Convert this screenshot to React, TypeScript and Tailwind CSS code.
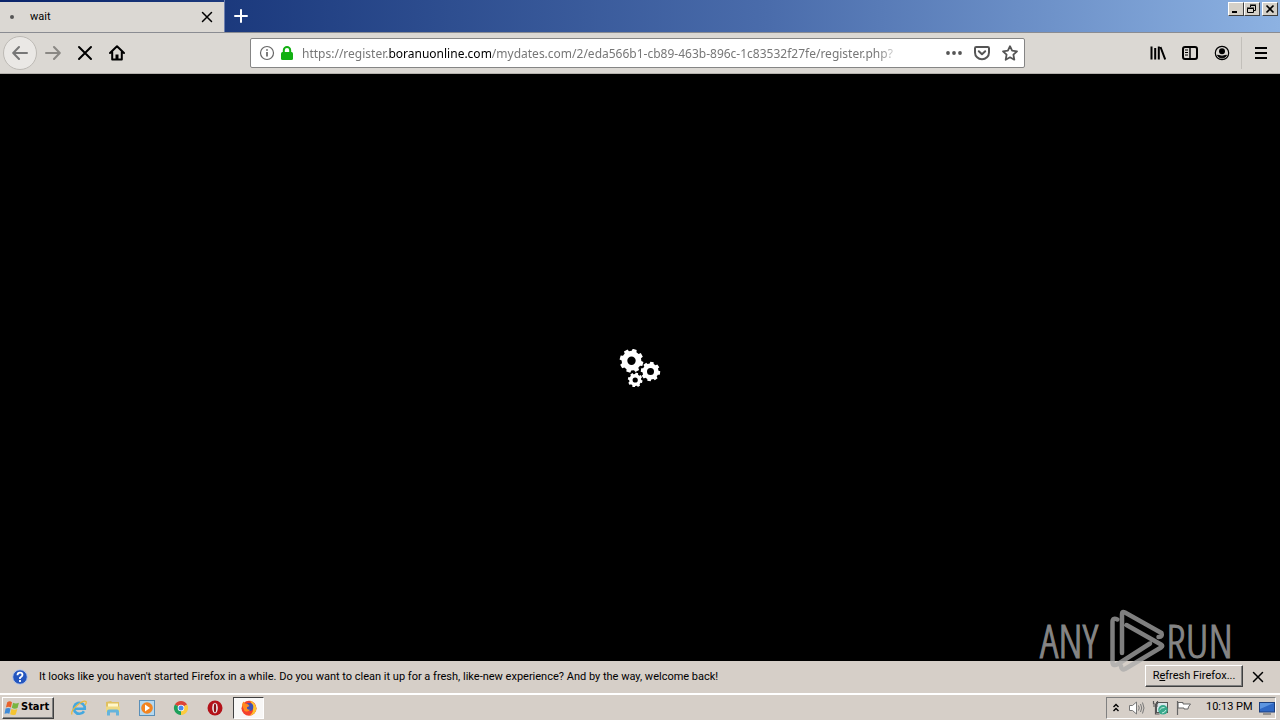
import React from "react";

const ui = "font-['Roboto','Liberation_Sans',sans-serif]";

type IconProps = { className?: string };

function gearPath(cx: number, cy: number, r: number, teeth: number, hole: number, turn: number): string {
  const pts: string[] = [];
  const step = (Math.PI * 2) / teeth;
  for (let i = 0; i < teeth; i++) {
    const a = (i + turn) * step;
    const put = (rad: number, ang: number) =>
      pts.push(`${(cx + rad * Math.cos(ang)).toFixed(2)} ${(cy + rad * Math.sin(ang)).toFixed(2)}`);
    put(r * 0.82, a - step * 0.32);
    put(r, a - step * 0.22);
    put(r, a + step * 0.22);
    put(r * 0.82, a + step * 0.32);
  }
  return `M${pts.join("L")}Z M${cx - hole} ${cy}a${hole} ${hole} 0 1 0 ${hole * 2} 0a${hole} ${hole} 0 1 0 ${-hole * 2} 0Z`;
}

function Gears() {
  return (
    <svg width="42" height="38" viewBox="0 0 42 38" fill="#fff" fillRule="evenodd" aria-label="Loading">
      <path d={gearPath(12.5, 11.7, 12, 8, 4.2, 0.35)} />
      <path d={gearPath(31.5, 22.5, 9.8, 8, 3.5, 0.2)} />
      <path d={gearPath(16.2, 31, 7.4, 8, 2.6, 0.3)} />
    </svg>
  );
}

function Cross({ className }: IconProps) {
  return (
    <svg className={className} viewBox="0 0 16 16" fill="none" stroke="currentColor" strokeWidth="2" strokeLinecap="round">
      <path d="M2 2l12 12M14 2L2 14" />
    </svg>
  );
}

function Arrow({ className }: IconProps) {
  return (
    <svg className={className} width="16" height="16" viewBox="0 0 16 16" fill="none" stroke="currentColor" strokeWidth="2" strokeLinecap="round" strokeLinejoin="round">
      <path d="M15 8H1.500M7 2L1.200 8L7 14" />
    </svg>
  );
}

function WindowButton({ label, children }: { label: string; children: React.ReactNode }) {
  return (
    <button aria-label={label} className="flex h-[14px] w-4 items-center justify-center border border-t-white border-l-white border-r-[#404040] border-b-[#404040] bg-[#d4d0c8]">
      <svg width="12" height="10" viewBox="0 0 12 10" fill="none" stroke="#000">
        {children}
      </svg>
    </button>
  );
}

function TabStrip() {
  return (
    <div className="flex h-8 items-stretch bg-linear-to-r from-[#0a246a] via-[#4a6cab] via-60% to-[#8db2e2]">
      <div className="mt-[2px] flex w-56 items-center bg-[#dbd8d3] pr-[11px] pl-[10px]">
        <span className="h-1 w-1 rounded-full bg-[#555]" />
        <span className="ml-4 flex-1 text-[11px]">wait</span>
        <button aria-label="Close tab" className="flex h-3 w-3 items-center justify-center">
          <Cross className="h-3 w-3" />
        </button>
      </div>
      <button aria-label="New tab" className="flex w-8 items-center justify-center border-l border-[#6d7fae]">
        <svg width="14" height="14" viewBox="0 0 14 14" stroke="#fff" strokeWidth="2" strokeLinecap="round">
          <path d="M7 1v12M1 7h12" />
        </svg>
      </button>
      <div className="ml-auto flex pt-[2px] pr-[2px]">
        <WindowButton label="Minimize">
          <path d="M2 8h5" strokeWidth="2" />
        </WindowButton>
        <WindowButton label="Restore">
          <path d="M4.500 3V1.500H9.500V6.500H7.500M4 1h6M1.500 4.500h6v4h-6zM1 4h7" />
        </WindowButton>
        <span className="w-[2px]" />
        <WindowButton label="Close">
          <path d="M2.500 1.500l7 7M9.500 1.500l-7 7" strokeWidth="1.700" />
        </WindowButton>
      </div>
    </div>
  );
}

function AddressBar() {
  return (
    <div className="flex h-[30px] w-[775px] items-center rounded-[2px] border border-[#858585] bg-white pr-[6px] pl-2 text-[#555]">
      <button aria-label="Site information">
        <svg width="16" height="16" viewBox="0 0 16 16" fill="none" stroke="#666">
          <circle cx="8" cy="8" r="6.500" strokeWidth="1.200" />
          <path d="M8 7v4.500M8 4.200v1.600" strokeWidth="1.700" />
        </svg>
      </button>
      <svg className="ml-1" width="16" height="16" viewBox="0 0 16 16" aria-label="Secure connection">
        <rect x="2" y="7" width="12" height="8" rx="1.500" fill="#12b012" />
        <path d="M4.800 8V5.200a3.200 3.200 0 0 1 6.400 0V8" fill="none" stroke="#12b012" strokeWidth="2" />
      </svg>
      <div className="ml-[7px] min-w-0 flex-1 overflow-hidden pt-px font-['Noto_Sans',sans-serif] text-[12px] whitespace-nowrap text-[#777] [mask-image:linear-gradient(to_right,#000_575px,transparent_600px)]">
        https://register.<span className="text-black">boranuonline.com</span>/mydates.com/2/eda566b1-cb89-463b-896c-1c83532f27fe/register.php?
      </div>
      <div className="flex items-center gap-3">
        <button aria-label="Page actions">
          <svg width="16" height="16" viewBox="0 0 16 16" fill="#555">
            <circle cx="2" cy="8" r="1.900" />
            <circle cx="8" cy="8" r="1.900" />
            <circle cx="14" cy="8" r="1.900" />
          </svg>
        </button>
        <button aria-label="Save to Pocket">
          <svg width="16" height="16" viewBox="0 0 16 16" fill="none" stroke="#555" strokeWidth="2" strokeLinecap="round" strokeLinejoin="round">
            <path d="M2.300 2h11.400q1.300 0 1.300 1.300V7.500a7 6.800 0 0 1-14 0V3.300Q1 2 2.300 2ZM4.800 6.300L8 9.300l3.200-3" />
          </svg>
        </button>
        <button aria-label="Bookmark this page">
          <svg width="16" height="16" viewBox="0 0 16 16" fill="none" stroke="#555" strokeWidth="1.800" strokeLinejoin="round">
            <path d="M8 1.200l2.100 4.500 4.900.6-3.600 3.400.9 5L8 12.300l-4.300 2.400.9-5L1 6.300l4.900-.6z" />
          </svg>
        </button>
      </div>
    </div>
  );
}

function NavBar() {
  return (
    <nav className="flex h-[42px] items-center border-t border-b border-t-[#8a8c92] border-b-[#b5b2ad] bg-[#dbd8d3] pr-2 pl-[3px]">
      <div className="flex flex-1 items-center">
        <button aria-label="Back" className="flex h-[34px] w-[34px] items-center justify-center rounded-full border border-[#bdbab5] bg-[#eae8e5] text-[#777]">
          <Arrow />
        </button>
        <button aria-label="Forward" className="ml-2 text-[#8a8884]">
          <Arrow className="rotate-180" />
        </button>
        <button aria-label="Stop" className="ml-4">
          <Cross className="h-4 w-4" />
        </button>
        <button aria-label="Home" className="ml-4">
          <svg width="16" height="16" viewBox="0 0 16 16" fill="none" stroke="#000" strokeWidth="2" strokeLinecap="round" strokeLinejoin="round">
            <path d="M1 8l7-6.700L15 8M3.200 7v7.500h9.600V7" />
            <path d="M8 14V9.500" strokeWidth="3" strokeLinecap="butt" />
          </svg>
        </button>
      </div>
      <AddressBar />
      <div className="flex flex-1 items-center justify-end">
        <div className="flex items-center gap-4">
          <button aria-label="Library">
            <svg width="16" height="16" viewBox="0 0 16 16" fill="none" stroke="#000" strokeWidth="2">
              <path d="M1.500 1.500v13M5.200 3v11.500M8.800 1.500v13M10.500 2L15.200 14.500" />
            </svg>
          </button>
          <button aria-label="Sidebars">
            <svg width="16" height="16" viewBox="0 0 16 16" fill="none" stroke="#000" strokeWidth="2">
              <rect x="1" y="2" width="14" height="12" rx="2" />
              <path d="M8 2v12" strokeWidth="1.500" />
              <path d="M3 5h3M3 7.500h3M3 10h3" strokeWidth="1" />
            </svg>
          </button>
          <button aria-label="Account">
            <svg width="16" height="16" viewBox="0 0 16 16">
              <circle cx="8" cy="8" r="6.700" fill="none" stroke="#000" strokeWidth="1.200" />
              <circle cx="8" cy="6.300" r="3" />
              <path d="M3.500 10.200q4.500 2 9 0A5 5 0 0 1 3.500 10.200" stroke="#000" />
            </svg>
          </button>
        </div>
        <span className="ml-[11px] h-8 w-px bg-[#c2bfba]" />
        <button aria-label="Open menu" className="mr-[3px] ml-[11px]">
          <svg width="16" height="16" viewBox="0 0 16 16" stroke="#000" strokeWidth="2">
            <path d="M2 3h12M2 8h12M2 13h12" />
          </svg>
        </button>
      </div>
    </nav>
  );
}

function Watermark() {
  return (
    <div className="pointer-events-none absolute right-[47px] bottom-[47px] flex items-center font-['Open_Sans_Condensed_Light','Roboto_Condensed',sans-serif] text-[46px] leading-[46px] text-[#858585] [-webkit-text-stroke:1px_#858585]">
      <span>ANY</span>
      <svg className="ml-[10px]" width="58" height="66" viewBox="0 0 58 66" fill="none" stroke="#aaa" strokeOpacity="0.75" strokeWidth="4.500" strokeLinejoin="round" strokeLinecap="round">
        <path d="M9.300 12.500Q4.500 10 4.500 15V55Q4.500 60 10 57L42 36.500M14 46V7Q14 4 17 5.500L53.500 26Q55 30 50.500 30M18.500 18L53 37.500Q55.500 39 53 40.500L17 62Q13.500 63.500 13 59" />
      </svg>
      <span>RUN</span>
    </div>
  );
}

function Notification() {
  return (
    <div className="flex h-8 items-center bg-[#d6cfc8] pr-4 pl-3 text-[11px]">
      <svg width="16" height="16" viewBox="0 0 16 16" aria-hidden="true">
        <circle cx="8" cy="8" r="7.300" fill="#2456bf" stroke="#b8c8e8" />
        <path d="M5.500 6.200Q5.500 3.700 8 3.700T10.500 6Q10.500 7.300 8 8.700V10M8 11v2" fill="none" stroke="#fff" strokeWidth="1.800" />
      </svg>
      <p className="ml-[11px] flex-1 whitespace-nowrap">
        It looks like you haven't started Firefox in a while. Do you want to clean it up for a fresh, like-new experience? And by the way, welcome back!
      </p>
      <button className="mb-[2px] h-[22px] w-[98px] border border-t-white border-r-[#404040] border-b-[#404040] border-l-white bg-[#d6cfc8] whitespace-nowrap shadow-[inset_-1px_-1px_0_#808080]">
        R<u>e</u>fresh Firefox...
      </button>
      <button aria-label="Dismiss" className="ml-[9px]">
        <Cross className="h-3 w-3" />
      </button>
    </div>
  );
}

function Taskbar() {
  return (
    <footer className="flex h-[27px] items-center border-t-2 border-white bg-[#d6cfc8] pr-1 pl-[2px] text-[11px]">
      <button className="flex h-[22px] w-[52px] items-center gap-px border border-t-white border-r-[#404040] border-b-[#404040] border-l-white pl-px font-bold shadow-[inset_-1px_-1px_0_#808080]">
        <svg width="16" height="16" viewBox="0 0 15 15">
          <path d="M3 2q2.500-1.500 4.500 0L6.500 7Q4 5.800 1.800 7z" fill="#e8622c" />
          <path d="M8.500 2.500Q11 4 14 2.500L12.700 7.500Q10 8.800 7.300 7.300z" fill="#79b541" />
          <path d="M1.500 8Q4 7 6.200 8L5 13Q3 11.800.5 13z" fill="#3f8bd8" />
          <path d="M7 8.300Q9.500 10 12.500 8.500L11 13.500Q8.500 14.700 5.800 13.300z" fill="#f5c430" />
        </svg>
        <span className="font-['DejaVu_Sans_Condensed','DejaVu_Sans',sans-serif]">Start</span>
      </button>
      <div className="ml-[17px] flex items-center gap-[18px]">
        <button aria-label="Internet Explorer">
          <svg width="16" height="16" viewBox="0 0 16 16" fill="none">
            <path d="M13 11.200A5.500 5.500 0 1 1 13.800 8.800H4" stroke="#45a8df" strokeWidth="2.600" />
            <path d="M1 14.500Q-.5 11 6 5.500T15 1.500Q15.800 3 14 5" stroke="#eab93c" strokeWidth="1.200" />
          </svg>
        </button>
        <button aria-label="File Explorer">
          <svg width="16" height="16" viewBox="0 0 16 16">
            <path d="M1 2l5-1 1 1h7v9H1z" fill="#e0c060" />
            <path d="M3 3.500h10v4H3z" fill="#fff7c9" />
            <path d="M1 6.500h14v5.500H1z" fill="#efd982" />
            <path d="M2 15.500v-4q0-2 2-2h8q2 0 2 2v4h-3v-3H5v3z" fill="#64b4dc" />
          </svg>
        </button>
        <button aria-label="Media Player">
          <svg width="16" height="16" viewBox="0 0 16 16">
            <rect x=".5" y=".5" width="15" height="15" fill="#b5d8ef" stroke="#5a8fb8" />
            <circle cx="8" cy="8" r="5.800" fill="#f38420" />
            <path d="M6 4.500l5 3.500-5 3.500z" fill="#fff" />
          </svg>
        </button>
        <button aria-label="Chrome">
          <svg width="16" height="16" viewBox="0 0 16 16">
            <path d="M8 8L1.900 4.500A7 7 0 0 1 14.100 4.500z" fill="#dc4437" />
            <path d="M8 8L1.900 4.500A7 7 0 0 0 8 15z" fill="#1da05a" />
            <path d="M8 8L14.100 4.500A7 7 0 0 1 8 15z" fill="#fccb3e" />
            <circle cx="8" cy="8" r="3.300" fill="#fff" />
            <circle cx="8" cy="8" r="2.500" fill="#4789ee" />
          </svg>
        </button>
        <button aria-label="Opera">
          <svg width="16" height="16" viewBox="0 0 16 16">
            <circle cx="8" cy="8" r="7.500" fill="#b41219" />
            <ellipse cx="8" cy="8" rx="2.800" ry="5.200" fill="#eee" />
            <ellipse cx="8" cy="8" rx="1.200" ry="4.500" fill="#8a1014" />
          </svg>
        </button>
      </div>
      <button aria-label="Firefox" className="ml-[10px] flex h-[22px] w-[31px] items-center justify-center border border-t-[#404040] border-r-white border-b-white border-l-[#404040] bg-[#f8f7f6]">
        <svg width="16" height="16" viewBox="0 0 16 16">
          <circle cx="8" cy="8.200" r="7.500" fill="#f4412c" />
          <path d="M9 .5q6 2.500 6.500 8A7.500 7.500 0 0 1 8 15.700Q12.500 13 12 8.500T9 .5" fill="#ffc22d" />
          <circle cx="8.300" cy="7" r="4" fill="#3f51b5" />
          <path d="M1 5Q1 3 2.500 1.500L4 3.500 7 4.200 8.500 6 6 7.200Q5.500 10 9.500 9.600 7.500 12.600 3.500 11z" fill="#ff8a1f" />
        </svg>
      </button>
      <div className="ml-auto flex h-[22px] w-[170px] items-center border border-t-[#808080] border-r-white border-b-white border-l-[#808080] pl-[5px]">
        <button aria-label="Show hidden icons">
          <svg width="8" height="10" viewBox="0 0 8 10" fill="none" stroke="#000" strokeWidth="1.400">
            <path d="M1.500 4L4 1.500l2.500 2.500M1.500 8L4 5.500l2.500 2.500" />
          </svg>
        </button>
        <svg className="ml-2" width="17" height="16" viewBox="0 0 17 16" fill="none" stroke="#777">
          <path d="M1.500 5.500h3L8.500 2v12l-4-3.500h-3z" fill="#fff" />
          <path d="M10.500 5.500q1.500 2.500 0 5M12.500 4q2.500 4 0 8M14.500 2.500q3 5.500 0 11" />
        </svg>
        <svg className="ml-[7px]" width="17" height="16" viewBox="0 0 17 16">
          <rect x="4.500" y="2.500" width="11" height="10" fill="#d9e8ec" stroke="#555" />
          <path d="M1.500 1v3h4V1M3.500 4v10h4M1 6h5" fill="none" stroke="#555" strokeWidth="1.200" />
          <circle cx="11" cy="9.800" r="4.800" fill="#38a98c" />
          <path d="M7.500 10q2-3 5-2.500M10 13q3-.5 4-3" stroke="#c5eee2" fill="none" />
        </svg>
        <svg className="ml-[6px]" width="17" height="16" viewBox="0 0 17 16" fill="#fff" stroke="#666">
          <path d="M3 2.500h5v1.500h7.500l-2 2.800 -.5 2.200h-4V8H3z" />
          <path d="M2.500 1v14" strokeWidth="1.200" />
        </svg>
        <time className="ml-[14px] whitespace-nowrap">10:13 PM</time>
        <svg className="ml-auto" width="16" height="14" viewBox="0 0 16 14">
          <rect x=".5" y="1.500" width="15" height="9.500" fill="#2f68c4" stroke="#1c3f7d" />
          <path d="M1 2h14L1 8z" fill="#5d95e0" />
          <path d="M4 13h8" stroke="#555" />
        </svg>
      </div>
    </footer>
  );
}

export default function App() {
  return (
    <div className={`relative flex min-h-screen flex-col bg-black text-black ${ui}`}>
      <TabStrip />
      <NavBar />
      <main className="flex flex-1 items-center justify-center">
        <Gears />
      </main>
      <Notification />
      <Taskbar />
      <Watermark />
    </div>
  );
}
